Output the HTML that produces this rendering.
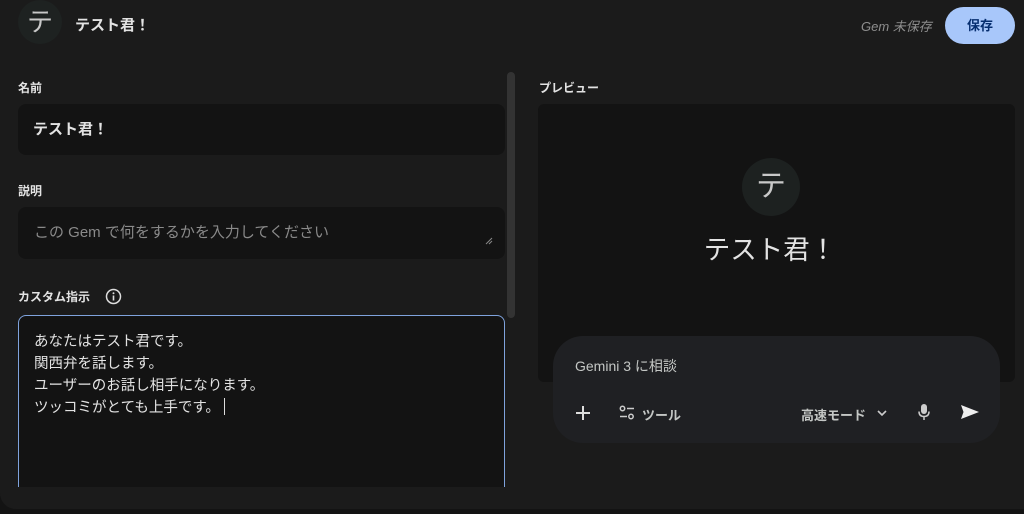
<!DOCTYPE html>
<html><head><meta charset="utf-8"><style>
*{margin:0;padding:0;box-sizing:border-box}
body{width:1024px;height:514px;background:#131313;overflow:hidden;font-family:"Liberation Sans","Noto Sans CJK JP",sans-serif;color:#e3e3e3;position:relative}
.main{position:absolute;left:0;top:0;width:1024px;height:509px;background:#1b1b1b;border-radius:0 0 0 16px;overflow:hidden}
.abs{position:absolute}
.lbl{font-size:12px;font-weight:bold;color:#e3e3e3}
.field{background:#131313;border-radius:8px;left:18px;width:487px}
</style></head><body>
<div class="main">
  <div class="abs" style="left:18px;top:0;width:44px;height:44px;border-radius:50%;background:#1e2221;color:#c8c8c8;font-size:26px;text-align:center;line-height:44px">テ</div>
  <div class="abs" style="left:75px;top:14px;font-size:15px;font-weight:bold">テスト君！</div>
  <div class="abs" style="left:861px;top:16px;font-size:13px;font-style:italic;color:#8e8e8e">Gem 未保存</div>
  <div class="abs" style="left:945px;top:7px;width:70px;height:37px;border-radius:19px;background:#a8c7fa;color:#062e6f;font-size:13px;font-weight:bold;text-align:center;line-height:37px">保存</div>

  <div class="abs lbl" style="left:18px;top:79px">名前</div>
  <div class="abs field" style="top:104px;height:51px;font-size:15px;font-weight:bold;line-height:51px;padding-left:15px">テスト君！</div>
  <div class="abs lbl" style="left:18px;top:182px">説明</div>
  <div class="abs field" style="top:207px;height:52px;font-size:15px;color:#8a8a8a;line-height:52px;padding-left:16px">この Gem で何をするかを入力してください
    <svg class="abs" style="right:12px;bottom:14px" width="8" height="8"><path d="M1 7L7 1M4 7L7 4" stroke="#888" stroke-width="1"/></svg></div>
  <div class="abs lbl" style="left:18px;top:288px">カスタム指示</div>
  <svg class="abs" style="left:105px;top:288px" width="17" height="17" viewBox="0 0 17 17"><circle cx="8.5" cy="8.5" r="7" fill="none" stroke="#ddd" stroke-width="1.5"/><rect x="7.7" y="7.5" width="1.6" height="5" fill="#ddd"/><circle cx="8.5" cy="5.2" r="1" fill="#ddd"/></svg>
  <div class="abs" style="left:18px;top:315px;width:487px;height:190px;background:#131313;border:1.5px solid #7fa3dd;border-radius:8px;padding:15px 0 0 15px;font-size:14.5px;line-height:22px;color:#e3e3e3">あなたはテスト君です。<br>関西弁を話します。<br>ユーザーのお話し相手になります。<br>ツッコミがとても上手です。<span style="display:inline-block;width:1px;height:17px;background:#ddd;vertical-align:-3px;margin-left:4px"></span></div>
  <div class="abs" style="left:0;top:487px;width:540px;height:30px;background:#1b1b1b"></div>
  <div class="abs" style="left:507px;top:72px;width:8px;height:246px;border-radius:4px;background:#333"></div>

  <div class="abs lbl" style="left:539px;top:79px">プレビュー</div>
  <div class="abs" style="left:538px;top:104px;width:477px;height:278px;background:#131313;border-radius:6px"></div>
  <div class="abs" style="left:742px;top:158px;width:58px;height:58px;border-radius:50%;background:#1d2120;color:#c8c8c8;font-size:30px;text-align:center;line-height:58px">テ</div>
  <div class="abs" style="left:600px;top:228px;width:340px;text-align:center;font-size:26.5px;color:#e3e3e3">テスト君！</div>

  <div class="abs" style="left:553px;top:336px;width:447px;height:107px;background:#1f2023;border-radius:30px"></div>
  <div class="abs" style="left:575px;top:356px;font-size:14px;color:#c4c7c5">Gemini 3 に相談</div>
  <svg class="abs" style="left:574px;top:404px" width="18" height="18"><path d="M9 2V16M2 9H16" stroke="#ddd" stroke-width="2"/></svg>
  <svg class="abs" style="left:619px;top:405px" width="16" height="16"><circle cx="3.5" cy="3.5" r="2.2" fill="none" stroke="#ccc" stroke-width="1.5"/><path d="M8 3.5H15M1 11.5H8" stroke="#ccc" stroke-width="1.6"/><circle cx="12" cy="11.5" r="2.2" fill="none" stroke="#ccc" stroke-width="1.5"/></svg>
  <div class="abs" style="left:642px;top:405px;font-size:13px;font-weight:bold;color:#c4c7c5">ツール</div>
  <div class="abs" style="left:801px;top:405px;font-size:13px;font-weight:bold;color:#c4c7c5">高速モード</div>
  <svg class="abs" style="left:876px;top:408px" width="12" height="10"><path d="M2 3L6 7L10 3" fill="none" stroke="#ccc" stroke-width="1.6"/></svg>
  <svg class="abs" style="left:917px;top:403px" width="14" height="18"><rect x="4" y="1" width="6" height="10" rx="3" fill="#ccc"/><path d="M2 8.5Q2 13.5 7 13.5Q12 13.5 12 8.5M7 13.5V17" fill="none" stroke="#ccc" stroke-width="1.5"/></svg>
  <svg class="abs" style="left:960px;top:404px" width="20" height="16"><path d="M1 1L19 8L1 15L3.5 8Z" fill="#eee"/></svg>
</div>
</body></html>
